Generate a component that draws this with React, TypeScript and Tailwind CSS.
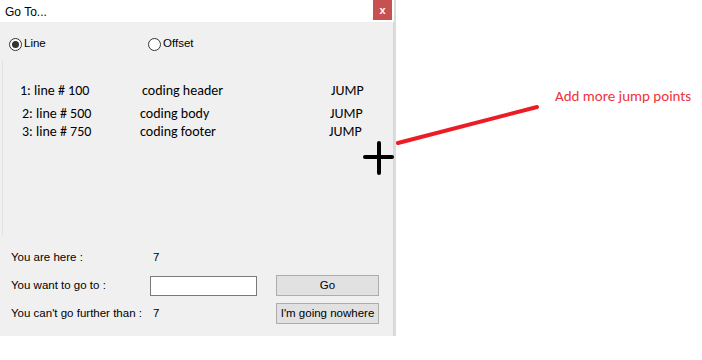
import React from "react";

const ui = { fontFamily: '"Segoe UI", "Liberation Sans", "Noto Sans", sans-serif' };
const cal = { fontFamily: '"Carlito", "Open Sans", "Noto Sans", sans-serif' };

function Radio({ checked, label }: { checked?: boolean; label: string }) {
  return (
    <div className="flex items-center gap-[2px]">
      <span className="w-[13px] h-[13px] rounded-full border border-[#333] bg-white flex items-center justify-center">
        {checked && <span className="w-[7px] h-[7px] rounded-full bg-[#333]" />}
      </span>
      <span>{label}</span>
    </div>
  );
}

export default function App() {
  return (
    <div className="w-[702px] h-[360px] bg-white relative overflow-hidden text-[11.5px] text-black whitespace-nowrap" style={ui}>
      <div className="w-[396px] h-[336px] flex flex-col border-r-[2px] border-[#dcdcdc]">
        <div className="h-[22px] bg-white flex items-start justify-between">
          <span className="pl-[5px] pt-[3px] text-[12px]">Go To...</span>
          <div className="w-[19px] h-[20px] bg-[#c75050] text-white flex items-center justify-center text-[11px] font-bold mr-[2px]">
            x
          </div>
        </div>
        <div className="flex-1 bg-[#f0f0f0] flex flex-col border-r-[1px] border-[#d8d8d8]">
          <div className="h-[38px] flex items-center pl-[9px] pt-[6px]">
            <div className="w-[139px]">
              <Radio checked label="Line" />
            </div>
            <Radio label="Offset" />
          </div>
          <div className="h-[176px] ml-[2px] border-l border-[#e3e3e3] pt-[20px] text-[14px]" style={cal}>
            <div className="flex h-[20px] items-center mb-[4px]">
              <span className="pl-[17px] w-[139px]">1: line # 100</span>
              <span className="w-[189px]">coding header</span>
              <span>JUMP</span>
            </div>
            <div className="flex h-[18px] items-center">
              <span className="pl-[19px] w-[137px]">2: line # 500</span>
              <span className="w-[190px]">coding body</span>
              <span>JUMP</span>
            </div>
            <div className="flex h-[18px] items-center">
              <span className="pl-[19px] w-[137px]">3: line # 750</span>
              <span className="w-[189px]">coding footer</span>
              <span>JUMP</span>
            </div>
          </div>
          <div className="flex flex-col pl-[11px] pt-[11px] gap-[7px]">
            <div className="flex items-center h-[21px]">
              <span className="w-[142px]">You are here :</span>
              <span>7</span>
            </div>
            <div className="flex items-center h-[21px]">
              <span className="w-[139px]">You want to go to :</span>
              <div className="w-[107px] h-[20px] bg-white border border-[#7a7a7a]" />
              <div className="ml-[19px] w-[103px] h-[21px] bg-[#e1e1e1] border border-[#adadad] flex items-center justify-center">
                Go
              </div>
            </div>
            <div className="flex items-center h-[21px]">
              <span className="w-[142px]">You can't go further than :</span>
              <span className="w-[123px]">7</span>
              <div className="w-[103px] h-[21px] bg-[#e1e1e1] border border-[#adadad] flex items-center justify-center">
                I'm going nowhere
              </div>
            </div>
          </div>
        </div>
      </div>

      {/* annotations */}
      <svg className="absolute left-0 top-0" width="702" height="360" viewBox="0 0 702 360">
        <line x1="365" y1="157" x2="392" y2="157" stroke="#000" strokeWidth="4" strokeLinecap="round" />
        <line x1="379" y1="143" x2="379" y2="173" stroke="#000" strokeWidth="4" strokeLinecap="round" />
        <line x1="398" y1="143" x2="537" y2="107" stroke="#ec1c24" strokeWidth="4" strokeLinecap="round" />
      </svg>
      <div className="absolute left-[555px] top-[85px] text-[15px] text-[#f0323c]" style={cal}>
        Add more jump points
      </div>
    </div>
  );
}
